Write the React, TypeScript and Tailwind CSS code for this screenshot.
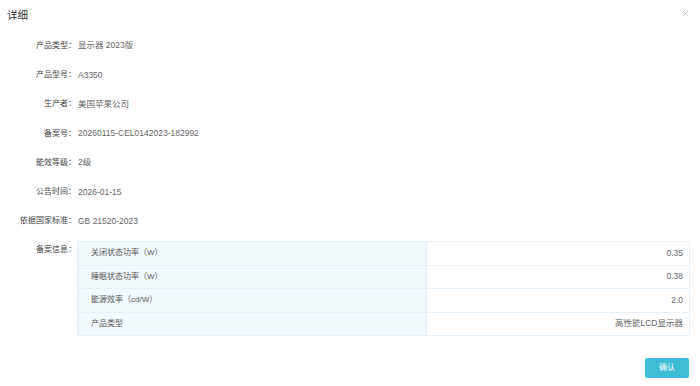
import { X } from 'lucide-react';

const fields = [
  { label: '产品类型：', value: '显示器 2023版' },
  { label: '产品型号：', value: 'A3350' },
  { label: '生产者：', value: '美国苹果公司' },
  { label: '备案号：', value: '20260115-CEL0142023-182992' },
  { label: '能效等级：', value: '2级' },
  { label: '公告时间：', value: '2026-01-15' },
  { label: '依据国家标准：', value: 'GB 21520-2023' },
];

const records = [
  { name: '关闭状态功率（W）', value: '0.35' },
  { name: '睡眠状态功率（W）', value: '0.38' },
  { name: '能源效率（cd/W）', value: '2.0' },
  { name: '产品类型', value: '高性能LCD显示器' },
];

export default function App() {
  return (
    <div className="relative h-[386px] w-[700px] overflow-hidden bg-white font-['Liberation_Sans','Noto_Sans_CJK_SC',sans-serif] text-[8px] text-[#666]">
      <div className="flex h-[31px] items-center justify-between pl-[7px] pr-[10px]">
        <h1 className="text-[10.5px] text-[#333]">详细</h1>
        <X className="-mt-[5px] h-[9px] w-[9px] text-[#aaa]" strokeWidth={1.5} />
      </div>

      <div>
        {fields.map((f) => (
          <div key={f.label} className="flex h-[29.3px] items-center">
            <span className="w-[76px] shrink-0 text-right text-[#444]">{f.label}</span>
            <span className="pl-[2px] text-[8.5px]">{f.value}</span>
          </div>
        ))}

        <div className="mt-[5px] flex">
          <span className="w-[76px] shrink-0 pt-[3px] text-right text-[#444]">备案信息：</span>
          <div className="ml-[1px] w-[613px] border-t border-l border-[#e6f2fb]">
            {records.map((r) => (
              <div key={r.name} className="flex h-[23.5px] border-b border-r border-[#e6f2fb]">
                <div className="flex w-[349px] items-center border-r border-[#e6f2fb] bg-[#f3fafe] pl-[13px] text-[#555]">
                  {r.name}
                </div>
                <div className="flex flex-1 items-center justify-end pr-[6px] text-[8.5px]">{r.value}</div>
              </div>
            ))}
          </div>
        </div>
      </div>

      <div className="flex justify-end pr-[11px] pt-[22px]">
        <button
          type="button"
          className="h-[20px] w-[44px] rounded-[2px] bg-[#3ebcd6] text-[8px] text-white"
        >
          确认
        </button>
      </div>
    </div>
  );
}
